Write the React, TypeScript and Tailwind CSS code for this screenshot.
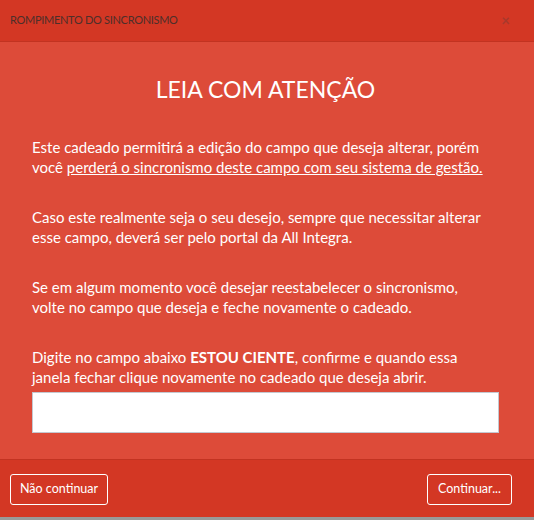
export default function App() {
  return (
    <div className="w-[534px] h-[520px] bg-[#999999] font-['Lato','Open_Sans',sans-serif] overflow-hidden">
      <div className="flex flex-col">
        {/* Header */}
        <div className="h-[42px] bg-[#d33724] border-b border-[#c23321] flex items-center justify-between pl-[10px] pr-[24px]">
          <span className="text-[11px] text-[#4d2f2a] tracking-[-0.3px]">ROMPIMENTO DO SINCRONISMO</span>
          <span className="text-[15px] leading-none text-[#a8392c] font-bold">×</span>
        </div>

        {/* Body */}
        <div className="bg-[#dd4b39] h-[417px] pl-[32px] pr-[35px] pt-[32px] text-white">
          <h1 className="text-[23px] leading-[30px] text-center">LEIA COM ATENÇÃO</h1>
          <p className="mt-[33px] text-[15px] leading-[20px]">
            Este cadeado permitirá a edição do campo que deseja alterar, porém
            <br />
            você <span className="underline">perderá o sincronismo deste campo com seu sistema de gestão.</span>
          </p>
          <p className="mt-[30px] text-[15px] leading-[20px]">
            Caso este realmente seja o seu desejo, sempre que necessitar alterar
            <br />
            esse campo, deverá ser pelo portal da All Integra.
          </p>
          <p className="mt-[30px] text-[15px] leading-[20px]">
            Se em algum momento você desejar reestabelecer o sincronismo,
            <br />
            volte no campo que deseja e feche novamente o cadeado.
          </p>
          <p className="mt-[30px] text-[15px] leading-[20px]">
            Digite no campo abaixo <b>ESTOU CIENTE</b>, confirme e quando essa
            <br />
            janela fechar clique novamente no cadeado que deseja abrir.
          </p>
          <input type="text" className="mt-[5px] block w-full h-[41px] bg-white border border-[#c4c8d0] outline-none" />
        </div>

        {/* Footer */}
        <div className="h-[58px] bg-[#d33724] border-t border-[#c23321] flex items-center justify-between pl-[10px] pr-[22px] pt-[1px]">
          <button className="h-[31px] px-[9px] border border-white rounded-[3px] text-white text-[12.5px]">Não continuar</button>
          <button className="h-[31px] px-[10px] border border-white rounded-[3px] text-white text-[12.5px]">Continuar...</button>
        </div>
      </div>
    </div>
  );
}
